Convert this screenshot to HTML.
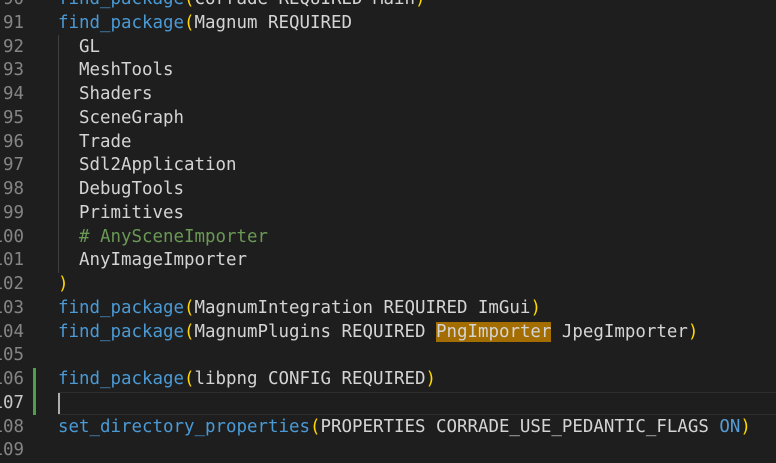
<!DOCTYPE html>
<html><head><style>
html,body{margin:0;padding:0;background:#1e1e1e;width:776px;height:446px;overflow:hidden}
.w{position:absolute;left:0;top:-12px;font-family:"DejaVu Sans Mono","Liberation Mono",monospace;font-size:17.45px;color:#d4d4d4}
.l{position:relative;height:23.76px;line-height:23.76px;white-space:pre}
.n{position:absolute;left:-56px;width:80px;text-align:right;color:#858585}
.c{position:absolute;left:58px}
.f{color:#4a9ad6}.p{color:#ffd700}.g{color:#6a9955}.k{color:#569cd6}
.h{background:#a36d00}
.ig{position:absolute;left:58px;top:35px;width:1px;height:238px;background:#404040}
.gr{position:absolute;left:33px;top:368px;width:3px;height:47px;background:#4f9e4a}
.cur{position:absolute;left:58px;right:0;top:392px;height:23px;border-top:1px solid #2e2e2e;border-bottom:1px solid #2e2e2e;box-sizing:border-box}
.cr{position:absolute;left:58px;top:393px;width:2px;height:21px;background:#aeafad}
</style></head><body>
<div class="ig"></div><div class="gr"></div><div class="cur"></div><div class="cr"></div>
<div class="w">
<div class="l"><span class="n">90</span><span class="c"><span class="f">find_package</span><span class="p">(</span>Corrade REQUIRED Main<span class="p">)</span></span></div>
<div class="l"><span class="n">91</span><span class="c"><span class="f">find_package</span><span class="p">(</span>Magnum REQUIRED</span></div>
<div class="l"><span class="n">92</span><span class="c">  GL</span></div>
<div class="l"><span class="n">93</span><span class="c">  MeshTools</span></div>
<div class="l"><span class="n">94</span><span class="c">  Shaders</span></div>
<div class="l"><span class="n">95</span><span class="c">  SceneGraph</span></div>
<div class="l"><span class="n">96</span><span class="c">  Trade</span></div>
<div class="l"><span class="n">97</span><span class="c">  Sdl2Application</span></div>
<div class="l"><span class="n">98</span><span class="c">  DebugTools</span></div>
<div class="l"><span class="n">99</span><span class="c">  Primitives</span></div>
<div class="l"><span class="n">100</span><span class="c">  <span class="g"># AnySceneImporter</span></span></div>
<div class="l"><span class="n">101</span><span class="c">  AnyImageImporter</span></div>
<div class="l"><span class="n">102</span><span class="c"><span class="p">)</span></span></div>
<div class="l"><span class="n">103</span><span class="c"><span class="f">find_package</span><span class="p">(</span>MagnumIntegration REQUIRED ImGui<span class="p">)</span></span></div>
<div class="l"><span class="n">104</span><span class="c"><span class="f">find_package</span><span class="p">(</span>MagnumPlugins REQUIRED <span class="h">PngImporter</span> JpegImporter<span class="p">)</span></span></div>
<div class="l"><span class="n">105</span><span class="c"></span></div>
<div class="l"><span class="n">106</span><span class="c"><span class="f">find_package</span><span class="p">(</span>libpng CONFIG REQUIRED<span class="p">)</span></span></div>
<div class="l"><span class="n" style="color:#c6c6c6">107</span><span class="c"></span></div>
<div class="l"><span class="n">108</span><span class="c"><span class="f">set_directory_properties</span><span class="p">(</span>PROPERTIES CORRADE_USE_PEDANTIC_FLAGS <span class="k">ON</span><span class="p">)</span></span></div>
<div class="l"><span class="n">109</span><span class="c"></span></div>
</div>
</body></html>
